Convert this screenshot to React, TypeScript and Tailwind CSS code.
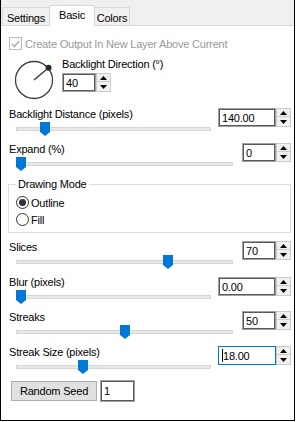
import React from "react";

const F = "font-['Liberation_Sans',Arial,sans-serif] text-[11px] tracking-[-0.2px] leading-[14px]";

function Arrows() {
  return (
    <div className="flex flex-col w-[15px] h-[19px]">
      <div className="h-[9px] border border-[#cccccc] bg-[#f0f0f0] flex items-center justify-center">
        <svg width="7" height="4" viewBox="0 0 7 4"><polygon points="3.5,0 7,4 0,4" fill="#000" /></svg>
      </div>
      <div className="h-[10px] border border-t-0 border-[#cccccc] bg-[#f0f0f0] flex items-center justify-center">
        <svg width="7" height="4" viewBox="0 0 7 4"><polygon points="0,0 7,0 3.5,4" fill="#000" /></svg>
      </div>
    </div>
  );
}

function Spinner({ value, wide, focused }: { value: string; wide?: boolean; focused?: boolean }) {
  return (
    <div className="flex">
      <div
        className={`${wide ? "w-[58px]" : "w-[34px]"} h-[19px] bg-white ${
          focused ? "border border-[#0078d7]" : "border border-[#a0a0a0]"
        }`}
      >
        <div
          className={`h-full flex items-center ${focused ? "pl-[2px] border border-white" : "pl-[2px] border border-[#5a5a5a]"}`}
        >
          {focused && <span className="w-px h-[13px] bg-black" />}
          <span className={`${F} text-black`}>{value}</span>
        </div>
      </div>
      <Arrows />
    </div>
  );
}

function Thumb({ x }: { x: number }) {
  return (
    <svg className="absolute top-0" style={{ left: x }} width="10" height="14" viewBox="0 0 10 14">
      <polygon points="0,0 10,0 10,10 5,14 0,10" fill="#0078d7" />
    </svg>
  );
}

function SliderRow({
  label,
  value,
  wide,
  thumb,
  focused,
  spinTop,
}: {
  label: string;
  value: string;
  wide?: boolean;
  thumb: number;
  focused?: boolean;
  spinTop?: boolean;
}) {
  return (
    <div className="flex items-start justify-between h-[35px] pl-[8px] pr-[3px]">
      <div className="flex flex-col">
        <div className={`${F} text-black h-[14px] whitespace-nowrap`}>{label}</div>
        <div className={`relative h-[14px] ml-[7px] mt-[1px] ${wide ? "w-[195px]" : "w-[217px]"}`}>
          <div className="mt-[5px] h-[4px] bg-[#e7e7e7] border border-[#d6d6d6]" />
          <Thumb x={thumb} />
        </div>
      </div>
      <div className={spinTop ? "mt-[2px]" : "mt-[1px]"}>
        <Spinner value={value} wide={wide} focused={focused} />
      </div>
    </div>
  );
}

function Radio({ checked, label }: { checked?: boolean; label: string }) {
  return (
    <div className="flex items-center h-[17px] pl-[7px]">
      <div className="w-[13px] h-[13px] rounded-full border border-[#333] bg-white flex items-center justify-center">
        {checked && <div className="w-[7px] h-[7px] rounded-full bg-[#333]" />}
      </div>
      <span className={`${F} text-black ml-[2px]`}>{label}</span>
    </div>
  );
}

export default function App() {
  const a = (40 * Math.PI) / 180;
  const dx = 20 + 19 * Math.cos(a);
  const dy = 20 - 19 * Math.sin(a);
  return (
    <div className="w-[296px] h-[422px] bg-white">
      <div className="w-[295px] h-[421px] border-l border-r border-b border-black bg-[#f0f0f0] flex flex-col">
        <div className="h-[25px] flex items-end pl-[1px] shrink-0">
          <div className={`${F} text-black w-[47px] h-[18px] border-t border-l border-[#d9d9d9] bg-[#f0f0f0] flex justify-center pt-[3px]`}>
            Settings
          </div>
          <div className={`${F} text-black w-[46px] h-[21px] -mb-px relative z-10 border-t border-l border-r border-[#d9d9d9] bg-white flex justify-center pt-[2px]`}>
            Basic
          </div>
          <div className={`${F} text-black w-[35px] h-[18px] border-t border-r border-[#d9d9d9] bg-[#f0f0f0] flex justify-center pt-[3px]`}>
            Colors
          </div>
        </div>
        <div className="flex-1 bg-white border-t border-[#d9d9d9] flex flex-col">
          <div className="flex items-center mt-[11px] pl-[8px] h-[13px]">
            <div className="w-[13px] h-[13px] border border-[#bcbcbc] bg-white flex items-center justify-center">
              <svg width="9" height="8" viewBox="0 0 9 8">
                <polyline points="1,4 3.5,6.5 8,1" fill="none" stroke="#a8a8a8" strokeWidth="1.3" />
              </svg>
            </div>
            <span className={`${F} text-[#9a9a9a] ml-[3px] whitespace-nowrap`}>Create Output In New Layer Above Current</span>
          </div>

          <div className="flex items-start mt-[7px] pl-[13px]">
            <svg className="mt-[3px]" width="40" height="40" viewBox="0 0 40 40">
              <circle cx="20" cy="20" r="18.5" fill="none" stroke="#3c3c3c" strokeWidth="1.3" />
              <line x1="20" y1="20" x2={dx} y2={dy} stroke="#3c3c3c" strokeWidth="1.5" />
              <circle cx={dx} cy={dy} r="3" fill="#2a2a2a" />
            </svg>
            <div className="flex flex-col ml-[8px]">
              <div className={`${F} text-black h-[14px]`}>Backlight Direction (°)</div>
              <div className="mt-[2px]">
                <Spinner value="40" />
              </div>
            </div>
          </div>

          <div className="mt-[7px]">
            <SliderRow label="Backlight Distance (pixels)" value="140.00" wide thumb={24} />
            <SliderRow label="Expand (%)" value="0" thumb={0} />
          </div>

          <fieldset className="ml-[7px] mr-[3px] h-[56px] border border-[#dcdcdc]">
            <legend className={`${F} text-black ml-[7px] px-[2px]`}>Drawing Mode</legend>
            <div className="mt-[3px]">
              <Radio checked label="Outline" />
              <Radio label="Fill" />
            </div>
          </fieldset>

          <div className="mt-[7px]">
            <SliderRow label="Slices" value="70" thumb={147} />
            <SliderRow label="Blur (pixels)" value="0.00" wide thumb={0} spinTop />
            <SliderRow label="Streaks" value="50" thumb={104} />
            <SliderRow label="Streak Size (pixels)" value="18.00" wide thumb={62} focused />
          </div>

          <div className="flex items-center h-[22px] pl-[10px]">
            <div className={`${F} text-black w-[86px] h-[20px] bg-[#e1e1e1] border border-[#adadad] flex items-center justify-center`}>
              Random Seed
            </div>
            <div className="ml-[3px] w-[35px] h-[22px] border border-[#a0a0a0] bg-white">
              <div className={`${F} text-black h-full border border-[#5a5a5a] flex items-center pl-[2px]`}>1</div>
            </div>
          </div>
        </div>
      </div>
    </div>
  );
}
